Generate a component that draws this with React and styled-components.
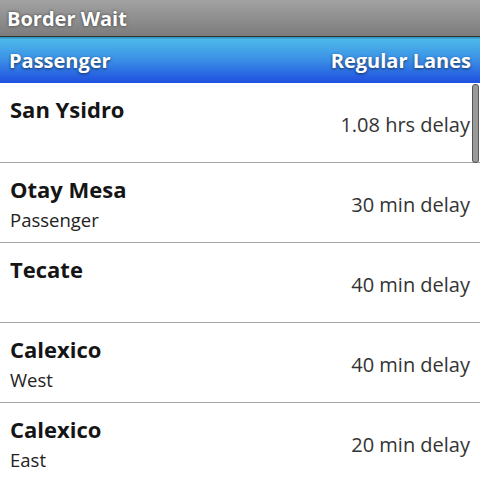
import React from 'react';
import styled, { createGlobalStyle } from 'styled-components';

const GlobalStyle = createGlobalStyle`
  html, body {
    margin: 0;
    padding: 0;
    background: #fff;
    font-family: "Open Sans", "DejaVu Sans", sans-serif;
  }
`;

const Screen = styled.div`
  width: 480px;
  height: 478px;
  overflow: hidden;
  display: flex;
  flex-direction: column;
  background: #fff;
`;

const TitleBar = styled.div`
  height: 36px;
  display: flex;
  align-items: center;
  padding-left: 7px;
  background: linear-gradient(#a2a2a2, #7c7c7c);
  border-bottom: 1px solid #333;
  color: #fff;
  font-weight: 700;
  font-size: 20px;
  text-shadow: 0 0 3px rgba(0, 0, 0, 0.6);
  flex-shrink: 0;
`;

const HeaderBar = styled.div`
  height: 46px;
  display: flex;
  align-items: center;
  justify-content: space-between;
  padding: 1px 9px 0;
  box-sizing: border-box;
  background: linear-gradient(#2e98c2 0, #2e98c2 1px, #4db9ea 2px, #3a8fe6 50%, #1f4ee0 100%);
  color: #fff;
  font-weight: 700;
  font-size: 20px;
  text-shadow: 0 1px 3px rgba(0, 0, 0, 0.6);
  flex-shrink: 0;
`;

const List = styled.div`
  position: relative;
  flex: 1;
`;

const Row = styled.div`
  height: 79px;
  display: flex;
  justify-content: space-between;
  padding: 0 10px;
  border-bottom: 1px solid #a3a3a3;
`;

const Names = styled.div`
  display: flex;
  flex-direction: column;
  padding-top: 11px;
`;

const Name = styled.div`
  font-size: 22px;
  font-weight: 700;
  color: #151515;
  line-height: 30px;
`;

const Sub = styled.div`
  font-size: 18.5px;
  color: #222;
  line-height: 30px;
  margin-top: 1px;
`;

const Delay = styled.div`
  align-self: center;
  font-size: 20px;
  color: #333;
  padding-top: 4px;
`;

const ScrollThumb = styled.div`
  position: absolute;
  top: 1px;
  right: 1px;
  width: 5px;
  height: 77px;
  border-radius: 3px;
  background: #9a9a9a;
  border: 1px solid #555;
`;

const crossings = [
  { name: 'San Ysidro', delay: '1.08 hrs delay' },
  { name: 'Otay Mesa', sub: 'Passenger', delay: '30 min delay' },
  { name: 'Tecate', delay: '40 min delay' },
  { name: 'Calexico', sub: 'West', delay: '40 min delay' },
  { name: 'Calexico', sub: 'East', delay: '20 min delay' },
];

export default function App() {
  return (
    <Screen>
      <GlobalStyle />
      <TitleBar>Border Wait</TitleBar>
      <HeaderBar>
        <span>Passenger</span>
        <span>Regular Lanes</span>
      </HeaderBar>
      <List>
        {crossings.map((c, i) => (
          <Row key={i}>
            <Names>
              <Name>{c.name}</Name>
              {c.sub && <Sub>{c.sub}</Sub>}
            </Names>
            <Delay>{c.delay}</Delay>
          </Row>
        ))}
        <ScrollThumb />
      </List>
    </Screen>
  );
}
